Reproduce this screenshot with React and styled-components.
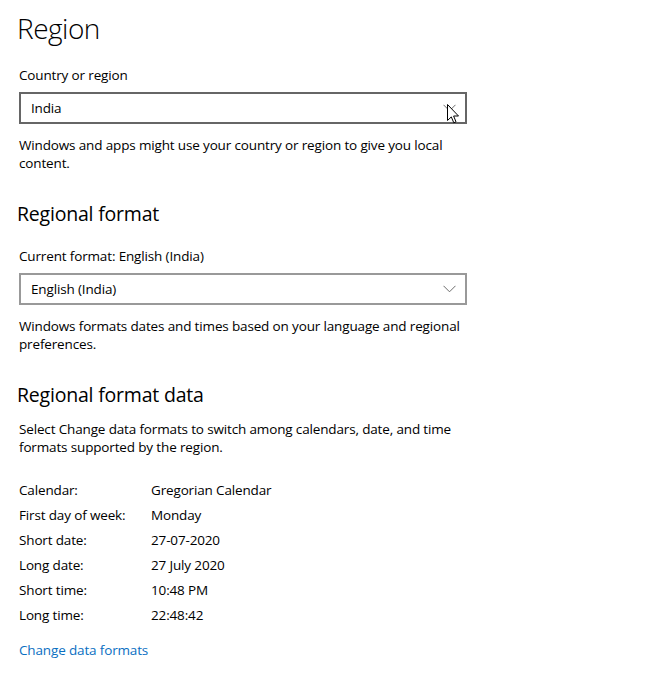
import React from 'react'
import styled, { createGlobalStyle } from 'styled-components'

const Global = createGlobalStyle`
  body {
    margin: 0;
    background: #fff;
    font-family: "Open Sans", "Noto Sans", sans-serif;
    color: #000;
  }
`

const Page = styled.div`
  padding: 8px 0 0 19px;
  width: 460px;
  font-size: 13.5px;
  letter-spacing: -0.15px;
`

const Title = styled.h1`
  margin: 0 0 0 -2px;
  font-size: 28px;
  font-weight: 300;
  line-height: 40px;
  letter-spacing: -0.5px;
`

const Heading = styled.h2`
  margin: ${p => p.$top || 28}px 0 0 -2px;
  font-size: 19.5px;
  font-weight: 400;
  line-height: 28px;
  letter-spacing: -0.2px;
`

const Label = styled.div`
  margin-top: ${p => p.$top || 17}px;
  line-height: 20px;
`

const Select = styled.div`
  position: relative;
  box-sizing: border-box;
  margin-top: 7px;
  width: 448px;
  height: 32px;
  border: 2px solid ${p => (p.$hover ? '#666666' : '#999999')};
  padding: 0 9px 0 10px;
  display: flex;
  align-items: center;
  justify-content: space-between;
`

const Note = styled.p`
  margin: ${p => p.$top || 12}px 0 0;
  line-height: 18px;
`

const Table = styled.div`
  margin-top: 21px;
  display: grid;
  grid-template-columns: 132px auto;
  grid-auto-rows: 25px;
  align-items: center;
`

const Link = styled.a`
  display: block;
  margin-top: 13px;
  line-height: 20px;
  color: #0a6fc2;
  text-decoration: none;
`

const Cursor = styled.svg`
  position: absolute;
  left: 426px;
  top: 10px;
`

function Chevron() {
  return (
    <svg width="13" height="8" viewBox="0 0 13 8">
      <path d="M0.5 0.8 L6.5 6.8 L12.5 0.8" fill="none" stroke="#6b6b6b" strokeWidth="1" />
    </svg>
  )
}

const rows = [
  ['Calendar:', 'Gregorian Calendar'],
  ['First day of week:', 'Monday'],
  ['Short date:', '27-07-2020'],
  ['Long date:', '27 July 2020'],
  ['Short time:', '10:48 PM'],
  ['Long time:', '22:48:42'],
]

export default function App() {
  return (
    <Page>
      <Global />
      <Title>Region</Title>

      <Label>Country or region</Label>
      <Select $hover>
        <span>India</span>
        <Chevron />
        <Cursor width="13" height="21" viewBox="0 0 13 21">
          <path
            d="M0.5 0.5 L0.5 16.5 L4.3 12.9 L6.8 18.8 L9 17.8 L6.6 12 L11.5 12 Z"
            fill="#fff"
            stroke="#000"
            strokeWidth="1"
            strokeLinejoin="miter"
          />
        </Cursor>
      </Select>
      <Note>Windows and apps might use your country or region to give you local content.</Note>

      <Heading>Regional format</Heading>
      <Label $top={18}>Current format: English (India)</Label>
      <Select>
        <span>English (India)</span>
        <Chevron />
      </Select>
      <Note>Windows formats dates and times based on your language and regional preferences.</Note>

      <Heading>Regional format data</Heading>
      <Note $top={11}>Select Change data formats to switch among calendars, date, and time formats supported by the region.</Note>

      <Table>
        {rows.map(([k, v]) => (
          <React.Fragment key={k}>
            <span>{k}</span>
            <span>{v}</span>
          </React.Fragment>
        ))}
      </Table>

      <Link href="#">Change data formats</Link>
    </Page>
  )
}
